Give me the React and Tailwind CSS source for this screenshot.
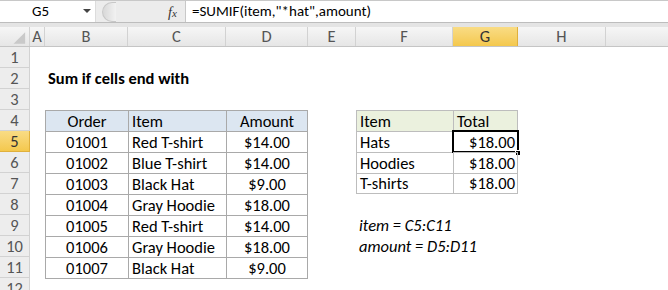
import React from "react";

const font = { fontFamily: "Carlito, Calibri, 'Open Sans', 'Liberation Sans', sans-serif" };

const colW = [30, 15, 83, 98, 82, 48, 97, 65, 88, 142];
const cols = ["", "A", "B", "C", "D", "E", "F", "G", "H", "I"];

const orders = [
  ["01001", "Red T-shirt", "$14.00"],
  ["01002", "Blue T-shirt", "$14.00"],
  ["01003", "Black Hat", "$9.00"],
  ["01004", "Gray Hoodie", "$18.00"],
  ["01005", "Red T-shirt", "$14.00"],
  ["01006", "Gray Hoodie", "$18.00"],
  ["01007", "Black Hat", "$9.00"],
];

const summary = [
  ["Hats", "$18.00"],
  ["Hoodies", "$18.00"],
  ["T-shirts", "$18.00"],
];

function ColHeader() {
  return (
    <div className="flex h-[20px] border-b border-[#c5c5c5]">
      {cols.map((c, i) => {
        const sel = c === "G";
        const base = sel
          ? "bg-gradient-to-b from-[#f9dc84] to-[#f4c84c] border-[#e0b03c] text-[#333]"
          : "bg-gradient-to-b from-[#f6f6f6] to-[#e6e6e6] border-[#d2d2d2] text-[#555]";
        return (
          <div
            key={i}
            style={{ width: colW[i] }}
            className={`shrink-0 flex items-center justify-center border-r text-[16.5px] ${base}`}
          >
            {i === 0 ? (
              <svg width="30" height="20" viewBox="0 0 30 20">
                <polygon points="26,5 26,17 14,17" fill="#c9c9c9" />
              </svg>
            ) : (
              c
            )}
          </div>
        );
      })}
    </div>
  );
}

function RowHead({ n }) {
  const sel = n === 5;
  return (
    <div
      className={`w-[30px] shrink-0 flex items-center justify-center border-r border-b text-[16.5px] ${
        sel
          ? "bg-gradient-to-b from-[#f9dc84] to-[#f4c84c] border-[#e0b03c] text-[#333]"
          : "bg-[#ededed] border-[#d2d2d2] text-[#555]"
      }`}
    >
      {n}
    </div>
  );
}

function Cell({ w, children, className = "" }) {
  return (
    <div style={{ width: w }} className={`shrink-0 h-full ${className}`}>
      {children}
    </div>
  );
}

export default function App() {
  const rows = [];
  for (let r = 1; r <= 12; r++) {
    const oi = r - 5;
    const si = r - 5;
    const content = (
      <>
        <Cell w={15} />
        {r === 2 ? (
          <div className="flex items-center pl-[3px] font-bold text-[16.5px] text-black whitespace-nowrap w-[83px] shrink-0 overflow-visible">
            Sum if cells end with
          </div>
        ) : r === 4 ? (
          <>
            <Cell w={83} className="bg-[#dce6f1] border-l border-t border-[#a9a9a9] flex items-center justify-center">Order</Cell>
            <Cell w={98} className="bg-[#dce6f1] border-l border-t border-[#a9a9a9] flex items-center pl-[3px]">Item</Cell>
            <Cell w={82} className="bg-[#dce6f1] border-l border-r border-t border-[#a9a9a9] flex items-center justify-center">Amount</Cell>
          </>
        ) : oi >= 0 && oi < 7 ? (
          <>
            <Cell w={83} className="border-l border-t border-[#a9a9a9] flex items-center justify-center">{orders[oi][0]}</Cell>
            <Cell w={98} className="border-l border-t border-[#a9a9a9] flex items-center pl-[3px] whitespace-nowrap">{orders[oi][1]}</Cell>
            <Cell w={82} className="border-l border-r border-t border-[#a9a9a9] flex items-center justify-center">{orders[oi][2]}</Cell>
          </>
        ) : r === 12 ? (
          <>
            <Cell w={83} className="border-t border-[#a9a9a9]" />
            <Cell w={98} className="border-t border-[#a9a9a9]" />
            <Cell w={82} className="border-t border-[#a9a9a9]" />
          </>
        ) : (
          <>
            <Cell w={83} />
            <Cell w={98} />
            <Cell w={82} />
          </>
        )}
        <Cell w={48} />
        {r === 4 ? (
          <>
            <Cell w={97} className="bg-[#ebf1de] border-l border-t border-[#bdbdbd] flex items-center pl-[3px]">Item</Cell>
            <Cell w={65} className="bg-[#ebf1de] border-l border-r border-t border-[#bdbdbd] flex items-center pl-[3px]">Total</Cell>
          </>
        ) : si >= 0 && si < 3 ? (
          <>
            <Cell w={97} className={`border-l border-t border-[#bdbdbd] flex items-center pl-[3px] ${si === 2 ? "border-b" : ""}`}>{summary[si][0]}</Cell>
            <Cell w={65} className={`relative border-l border-r border-t border-[#bdbdbd] flex items-center justify-end pr-[2px] ${si === 2 ? "border-b" : ""}`}>
              {summary[si][1]}
              {si === 0 && (
                <>
                  <div className="absolute left-[-2px] top-[-2px] right-[-2px] bottom-[-1px] border-2 border-black" />
                  <div className="absolute right-[-4px] bottom-[-4px] w-[6px] h-[6px] bg-black border border-white" />
                </>
              )}
            </Cell>
          </>
        ) : r === 9 || r === 10 ? (
          <div className="w-[162px] shrink-0 flex items-center pl-[3px] italic whitespace-nowrap">
            {r === 9 ? "item = C5:C11" : "amount = D5:D11"}
          </div>
        ) : (
          <>
            <Cell w={97} />
            <Cell w={65} />
          </>
        )}
      </>
    );
    rows.push(
      <div key={r} className="flex h-[21px]">
        <RowHead n={r} />
        <div className="flex flex-1 h-full text-[16.5px] text-black leading-none">{content}</div>
      </div>
    );
  }

  return (
    <div style={font} className="w-[668px] h-[290px] overflow-hidden bg-white text-black">
      <div className="flex h-[22px] border-t border-[#c8c8c8] bg-white">
        <div className="w-[95px] shrink-0 flex items-center justify-between pl-[32px] pr-[4px] text-[15px]">
          <span>G5</span>
          <svg width="8" height="5" viewBox="0 0 8 5">
            <polygon points="0,0 8,0 4,4" fill="#444" />
          </svg>
        </div>
        <div className="w-[90px] shrink-0 flex items-center bg-[#ececec] border-l border-[#dcdcdc] relative">
          <div className="ml-[6px] w-[14px] h-[20px] rounded-l-full bg-gradient-to-r from-[#d8d8d8] to-[#f2f2f2] border border-[#c8c8c8] border-r-0" />
          <span className="absolute left-[72px] top-[1px] italic text-[14px] text-[#333]" style={{ fontFamily: "'Liberation Serif', serif" }}>
            f<span className="text-[11px]">x</span>
          </span>
        </div>
        <div className="flex-1 flex items-center pl-[6px] text-[15px] border-l border-[#c8c8c8] whitespace-nowrap">
          =SUMIF(item,"*hat",amount)
        </div>
      </div>
      <div className="h-[5px] bg-[#e4e4e4] border-t border-[#bdbdbd]" />
      <ColHeader />
      {rows}
    </div>
  );
}
